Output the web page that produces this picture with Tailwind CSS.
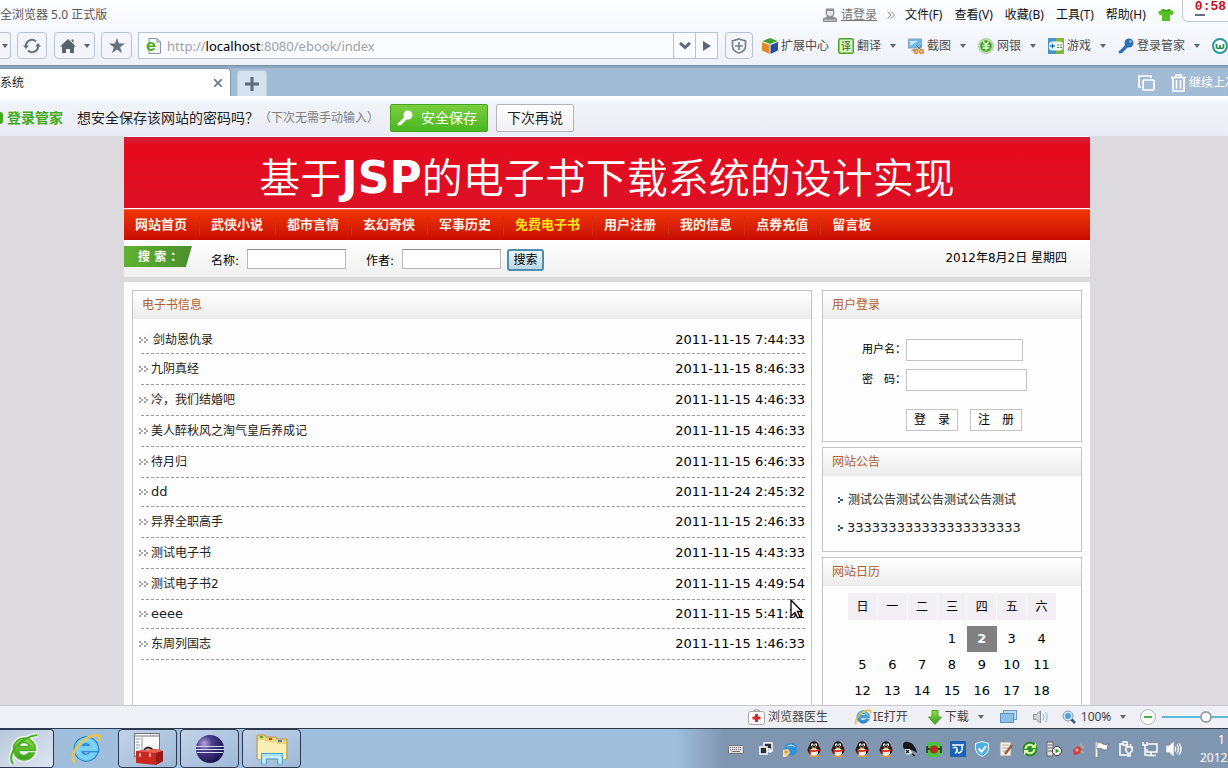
<!DOCTYPE html>
<html lang="zh-CN">
<head>
<meta charset="utf-8">
<title>基于JSP的电子书下载系统</title>
<script src="https://cdn.jsdelivr.net/npm/@tailwindcss/browser@4"></script>
</head>
<body class="relative flex h-screen flex-col overflow-hidden whitespace-nowrap bg-[#dcdade] font-['Noto_Sans','Noto_Sans_CJK_SC',sans-serif] text-xs text-[#222]">

<svg class="absolute h-0 w-0" aria-hidden="true">
  <defs>
    <linearGradient id="ieBlue" x1="0" y1="0" x2="0" y2="1"><stop offset="0" stop-color="#7fd6f8"/><stop offset="1" stop-color="#1f7fc4"/></linearGradient>
    <linearGradient id="leaf" x1="0" y1="0" x2="0" y2="1"><stop offset="0" stop-color="#8fdc4a"/><stop offset="1" stop-color="#3a9d1c"/></linearGradient>
    <radialGradient id="orb" cx=".3" cy=".3" r=".8"><stop offset="0" stop-color="#b9a6dc"/><stop offset=".35" stop-color="#4a3c8c"/><stop offset="1" stop-color="#17104a"/></radialGradient>
  </defs>
  <symbol id="caret" viewBox="0 0 6 4"><path d="M0 0h6L3 4z" fill="#5c6470"/></symbol>
  <symbol id="chev" viewBox="0 0 9 7"><path d="M0 0h2v2H0zM2 2h2v2H2zM0 4h2v2H0zM5 0h2v2H5zM7 2h2v2H7zM5 4h2v2H5z" fill="#a2a2a2"/></symbol>
  <symbol id="dot" viewBox="0 0 5 6"><path d="M0 0h2v2H0zM2 2h3v2H2zM0 4h2v2H0z" fill="#2c5a7c"/></symbol>
  <symbol id="key" viewBox="0 0 16 16"><circle cx="11" cy="5" r="4.5"/><path d="M8 6l2.500 2.500L4 15l-3 .5L.5 13l1.500-.5z"/><circle cx="12.500" cy="3.500" r="1.200" fill="#fff" fill-opacity=".6"/></symbol>
  <symbol id="e" viewBox="0 0 32 32">
    <path d="M16 5a11 11 0 1 0 10.500 15h-6a5.500 5.500 0 0 1-10-2.500H27.500A11.500 11.500 0 0 0 16 5zm-5.300 8.500a5.500 5.500 0 0 1 10.600 0z"/>
  </symbol>
  <symbol id="penguin" viewBox="0 0 16 16">
    <ellipse cx="8" cy="9" rx="6.500" ry="5.500" fill="#2a1c1c"/><circle cx="8" cy="5" r="4.700" fill="#1f1616"/>
    <ellipse cx="8" cy="11" rx="4" ry="4" fill="#f6f2ee"/><circle cx="6.300" cy="4" r="1.400" fill="#fff"/><circle cx="9.700" cy="4" r="1.400" fill="#fff"/>
    <circle cx="6.600" cy="4.200" r=".6" fill="#111"/><circle cx="9.400" cy="4.200" r=".6" fill="#111"/>
    <path d="M5 6.500h6L8 8z" fill="#f5a31c"/><path d="M3 8c3 1.700 7 1.700 10 0v2c-3 1.300-6 1.300-8 .8V13H3.500z" fill="#d8301c"/>
    <path d="M3 14.500h4.500v1.500H3zM8.500 14.500H13v1.500H8.500z" fill="#e79a22"/>
  </symbol>
</svg>

<!-- window title and menu -->
<header class="flex h-[30px] shrink-0 items-center justify-between bg-linear-to-b from-[#fdfdfe] to-[#f6f8fd]">
  <span class="text-[#555]">全浏览器 5.0 正式版</span>
  <div class="flex w-[405px] shrink-0 items-center self-stretch overflow-hidden">
    <svg class="mr-1 h-4 w-3.5 shrink-0" viewBox="0 0 14 16"><path d="M3 1.500h8l.5 5-1.500 3 4 2V15H0v-3.500l4-2-1.500-3z" fill="#8b8f94"/><path d="M4 4h6v3.500L7 9.500 4 7.500z" fill="#e6e6e6"/><path d="M1 12.500h12v1.500H1z" fill="#bcbfc2"/></svg>
    <a href="#" class="text-[#777] underline">请登录</a>
    <svg class="mr-2.5 ml-2.5 h-2 w-2 shrink-0" viewBox="0 0 8 8" fill="none" stroke="#8a8a8a"><path d="M.5.5L4 4 .5 7.500M4 .5L7.500 4 4 7.500"/></svg>
    <nav class="flex gap-3 text-[#111]">
      <a href="#">文件(F)</a><a href="#">查看(V)</a><a href="#">收藏(B)</a><a href="#">工具(T)</a><a href="#">帮助(H)</a>
    </nav>
    <svg class="ml-3 h-3.5 w-4 shrink-0" viewBox="0 0 16 14"><path d="M5 1q3 2 6 0l5 3-2 3.500-2-1V13H4V6.500l-2 1L0 4z" fill="#55c024"/><path d="M5 1q3 2 6 0l1.500 1Q8 5 3.500 2z" fill="#3a9a18"/></svg>
    <div class="ml-2 flex h-[22px] w-16 shrink-0 flex-col self-start rounded-bl-md border border-t-0 border-[#c0c9d4] bg-white/60 pl-3">
      <span class="font-['Liberation_Mono',monospace] text-[13px] leading-[14px] font-bold text-[#c01020]">0:58.</span>
      <span class="h-0.5 w-2.5 bg-[#666f80]"></span>
    </div>
  </div>
</header>

<!-- address toolbar -->
<div class="flex h-[35px] shrink-0 items-center bg-linear-to-b from-[#f6f8fd] to-[#edf2f8] pb-1 text-[#4c4c4c]">
  <button aria-label="前进" class="flex h-[27px] w-[11px] items-center rounded-r border border-l-0 border-[#b9c2d0] bg-[#f3f5fa]"><svg class="ml-0.5 h-1 w-1.5"><use href="#caret"/></svg></button>
  <button aria-label="刷新" class="ml-1.5 flex h-[27px] w-[30px] items-center justify-center rounded border border-[#b9c2d0] bg-[#f3f5fa]">
    <svg class="h-[18px] w-[18px]" viewBox="0 0 18 18" fill="none" stroke="#6c7680" stroke-width="2.200"><path d="M3 10a6 6 0 0 1 10-5.500M15 8A6 6 0 0 1 5 13.500"/><path d="M0 8.500h6L3 12zM12 9.500h6L15 6z" fill="#6c7680" stroke="none"/></svg></button>
  <button aria-label="主页" class="ml-[7px] flex h-[27px] w-[41px] items-center justify-center gap-2 rounded border border-[#b9c2d0] bg-[#f3f5fa]">
    <svg class="h-4 w-4" viewBox="0 0 16 16" fill="#59636e"><path d="M8 1l8 7.500h-2V15h-4v-4H6v4H2V8.500H0zM11.500 1.500h2V5l-2-2z"/></svg><svg class="h-1 w-1.5"><use href="#caret"/></svg></button>
  <button aria-label="收藏" class="ml-1.5 flex h-[27px] w-[31px] items-center justify-center rounded border border-[#b9c2d0] bg-[#f3f5fa]">
    <svg class="h-4 w-4" viewBox="0 0 16 16" fill="#66717c"><path d="M8 0l2 5.600h6l-4.800 3.600L13 15.200 8 11.600l-5 3.600 1.800-6L0 5.600h6z"/></svg></button>
  <div class="ml-1.5 flex h-[27px] min-w-0 flex-1 items-stretch border border-[#b9c2d0] bg-[#f9fbfe]">
    <label for="url" class="flex items-center pl-[7px]"><svg class="h-4 w-4" viewBox="0 0 16 16"><path d="M3 .5h8L14.500 4v11.500H3z" fill="#f2f5f7" stroke="#8a949c"/><path d="M11 .5V4h3.500" fill="none" stroke="#8a949c"/><svg x="-1.500" y="2" width="13" height="13" fill="#4cae1f"><use href="#e"/></svg></svg></label>
    <div class="relative min-w-0 flex-1">
      <input id="url" aria-label="地址" class="absolute inset-0 w-full pl-1.5 text-[13px] outline-none">
      <span class="pointer-events-none relative block pl-[5px] text-[13px] leading-[26px] text-[#a0a2a8]">http://<span class="text-black">localhost</span>:8080/ebook/index</span>
    </div>
    <button aria-label="历史地址" class="flex w-[22px] items-center justify-center border-l border-[#b9c2d0]"><svg class="h-2 w-3" viewBox="0 0 12 8" fill="none" stroke="#5d6874" stroke-width="3"><path d="M1 1l5 4.500L11 1"/></svg></button>
    <button aria-label="转到" class="flex w-[22px] items-center justify-center border-l border-[#b9c2d0]"><svg class="h-2.5 w-2" viewBox="0 0 8 10"><path d="M0 0l8 5-8 5z" fill="#5d6874"/></svg></button>
  </div>
  <button aria-label="安全防护" class="ml-[7px] flex h-[27px] w-7 items-center justify-center rounded border border-[#b9c2d0] bg-[#f3f5fa]">
    <svg class="h-4 w-4" viewBox="0 0 16 16" fill="none" stroke="#77828d" stroke-width="1.700"><path d="M8 1l6.500 2v5c0 4-3 6-6.500 7-3.500-1-6.500-3-6.500-7V3z"/><path d="M8 4v8M4 8h8"/></svg></button>
  <nav class="flex w-[475px] shrink-0 items-center overflow-hidden pl-[9px] [&>button]:shrink-0">
    <button class="flex items-center gap-[3px]"><svg class="h-4 w-4" viewBox="0 0 16 16"><path d="M8 0l7.500 3L8 6 .5 3z" fill="#3fa02a"/><path d="M0 4l7.500 3v9L0 12.500z" fill="#e08a2c"/><path d="M16 4L8.500 7v9l7.500-3.500z" fill="#2350a0"/></svg>扩展中心</button>
    <button class="ml-[9px] flex items-center gap-[3px]"><svg class="h-4 w-4" viewBox="0 0 16 16"><rect x=".75" y=".75" width="14.500" height="14.500" rx="1.500" fill="#d8f2bc" stroke="#4ea02c" stroke-width="1.500"/><text x="3" y="12" font-size="10" fill="#2b6d18">译</text></svg>翻译<svg class="ml-1.5 h-1 w-1.5"><use href="#caret"/></svg></button>
    <button class="ml-3 flex items-center gap-[3px]"><svg class="h-4 w-4" viewBox="0 0 16 16"><rect x=".5" y="1" width="13" height="9" fill="#6cb8ea" stroke="#8ca4b8"/><path d="M3 13h6v-2H5z" fill="#8ca4b8"/><path d="M2 3h8L2 8z" fill="#c5e7fa"/><path d="M8 7l5 5M14 7l-5 5" stroke="#777"/><g fill="none" stroke="#e98322" stroke-width="1.500"><circle cx="8" cy="13.500" r="1.800"/><circle cx="13.500" cy="13.500" r="1.800"/></g></svg>截图<svg class="ml-1.5 h-1 w-1.5"><use href="#caret"/></svg></button>
    <button class="ml-3 flex items-center gap-[3px]"><svg class="h-4 w-4" viewBox="0 0 16 16"><circle cx="8" cy="8" r="7.500" fill="#bde49a" stroke="#b8c8b0"/><circle cx="8" cy="8" r="5.800" fill="#3da22a"/><path d="M5 3.500l3 3 3-3M8 6.500v6M4.500 7.500h7M4.500 10h7" stroke="#e8fbd0" stroke-width="1.400" fill="none"/></svg>网银<svg class="ml-1.5 h-1 w-1.5"><use href="#caret"/></svg></button>
    <button class="ml-3 flex items-center gap-[3px]"><svg class="h-4 w-4" viewBox="0 0 16 16"><path d="M0 0h8v16H0z" fill="#4694c8"/><path d="M8 0h8v16H8z" fill="#83b63a"/><rect x="1" y="3.500" width="14" height="9" rx="3.500" fill="#f4fbff"/><path d="M4.500 5.500v5M2 8h5" stroke="#2a78b0" stroke-width="1.400"/><path d="M9 6.500h2v1H9zM12 6.500h2v1h-2zM9 9h2v1H9zM12 9h2v1h-2z" fill="#4a8a22"/></svg>游戏<svg class="ml-1.5 h-1 w-1.5"><use href="#caret"/></svg></button>
    <button class="ml-3 flex items-center gap-[3px]"><svg class="h-4 w-4" fill="#2d6fb0"><use href="#key"/></svg>登录管家<svg class="ml-1.5 h-1 w-1.5"><use href="#caret"/></svg></button>
    <button aria-label="微博" class="ml-3"><svg class="h-4 w-[18px]" viewBox="0 0 18 16"><circle cx="8" cy="8" r="7" fill="#f4fcff" stroke="#2b9a98" stroke-width="2"/><path d="M4.500 6v3.500q1.700 2 3.500 0V7v2.500q1.700 2 3.500 0V6" stroke="#288b48" stroke-width="1.700" fill="none"/></svg></button>
  </nav>
</div>

<!-- tabs -->
<div class="flex h-[31px] shrink-0 items-end border-t border-[#7b93ab] bg-[#a3bcd6] shadow-[inset_0_2px_1px_#8ba5be]">
  <div class="z-10 flex h-7 w-[231px] items-center justify-between rounded-tr border-t border-r border-[#7f9ab5] bg-white pr-[7px] text-[#222]">系统
    <button aria-label="关闭标签" class="p-px"><svg class="h-2 w-2" viewBox="0 0 8 8" stroke="#6c7c8c" stroke-width="1.800"><path d="M0 0l8 8M8 0L0 8"/></svg></button></div>
  <button aria-label="新建标签" class="ml-1.5 flex h-[26px] w-[30px] items-center justify-center rounded-t border border-b-0 border-[#bccddf] bg-[#d5e2ef]"><svg class="h-3.5 w-3.5" viewBox="0 0 14 14" stroke="#5c6b78" stroke-width="3"><path d="M7 0v14M0 7h14"/></svg></button>
  <div class="ml-auto flex w-[90px] items-center self-stretch overflow-hidden pt-1 text-white">
    <svg class="h-4 w-[17px] shrink-0" viewBox="0 0 17 16" fill="none" stroke="#fff" stroke-width="1.700"><path d="M3 12H1V1h12v2"/><rect x="5" y="5" width="11" height="10" rx="1"/></svg>
    <svg class="ml-4 h-[18px] w-[15px] shrink-0" viewBox="0 0 15 18" fill="none" stroke="#fff" stroke-width="1.700"><path d="M0 3.500h15M5 3V1h5v2M2 4v13h11V4M5.500 6v9M9.500 6v9"/></svg>
    <a href="#" class="ml-[3px]">继续上次</a>
  </div>
</div>

<!-- password prompt -->
<div class="flex h-10 shrink-0 items-center bg-linear-to-b from-white via-[#eff3f7] via-20% to-[#ebebf5] pt-1 text-sm leading-5">
  <span class="h-3 w-[3px] rounded-r bg-[#45aa1c]"></span>
  <span class="ml-1 font-bold text-[#45a91e]">登录管家</span>
  <span class="ml-3.5">想安全保存该网站的密码吗？</span>
  <span class="text-xs text-[#808080]">（下次无需手动输入）</span>
  <button class="ml-[11px] flex h-7 w-[98px] items-center gap-2 rounded-xs border border-[#46a31f] bg-linear-to-b from-[#79cf3e] to-[#47b71f] pl-1.5 text-white"><svg class="h-4 w-4" fill="#fff"><use href="#key"/></svg>安全保存</button>
  <button class="ml-2 h-7 w-[78px] rounded-xs border border-[#b4b4b8] bg-linear-to-b from-white to-[#f1f1f3]">下次再说</button>
</div>

<!-- web page -->
<main class="flex min-h-0 flex-1 justify-center overflow-hidden pr-3.5 font-['DejaVu_Sans','Noto_Sans_CJK_SC',sans-serif]">
  <div class="flex w-full max-w-[966px] flex-col bg-[#fdfdfd]">
    <div class="mt-px flex h-[71px] shrink-0 items-center justify-center bg-linear-to-b from-[#c9203a] via-[#e60a1c] via-10% to-[#dc1026] pt-2">
      <h1 class="font-['Noto_Sans_CJK_SC',sans-serif] text-[41px] leading-[56px] font-[350] text-white">基于<span class="font-['DejaVu_Sans',sans-serif] text-[44px] font-bold">JSP</span>的电子书下载系统的设计实现</h1>
    </div>
    <nav class="mt-px flex h-[31px] shrink-0 items-center border-t border-[#e8644c] bg-linear-to-b from-[#f23404] to-[#c80a04] text-[13px] leading-5 font-bold text-[#ffefe6]">
      <a href="#" class="border-r border-[#d42c10] pr-3 pl-[11px]">网站首页</a><a href="#" class="border-r border-[#d42c10] pr-3 pl-[11px]">武侠小说</a><a href="#" class="border-r border-[#d42c10] pr-3 pl-[11px]">都市言情</a><a href="#" class="border-r border-[#d42c10] pr-3 pl-[11px]">玄幻奇侠</a><a href="#" class="border-r border-[#d42c10] pr-3 pl-[11px]">军事历史</a><a href="#" class="border-r border-[#d42c10] pr-3 pl-[11px] text-[#ffe61a]">免费电子书</a><a href="#" class="border-r border-[#d42c10] pr-3 pl-[11px]">用户注册</a><a href="#" class="border-r border-[#d42c10] pr-3 pl-[11px]">我的信息</a><a href="#" class="border-r border-[#d42c10] pr-3 pl-[11px]">点券充值</a><a href="#" class="pl-[11px]">留言板</a>
    </nav>
    <form class="flex h-[42px] shrink-0 items-start border-b-[5px] border-[#dadadb] bg-linear-to-b from-white to-[#f0f0f1] pt-1.5 text-black">
      <span class="h-[21px] w-[68px] bg-linear-to-r from-[#5fb230] to-[#4a8f2c] pl-3.5 leading-[22px] font-bold text-white [clip-path:polygon(0_0,100%_0,91%_100%,0_100%)]">搜 索 ：</span>
      <label for="book" class="ml-[19px] w-9 pt-[7px] leading-4">名称:</label>
      <input id="book" class="mt-[3px] h-5 w-[99px] border border-[#b9b9bd] border-t-[#8c8c90] bg-white px-1">
      <label for="author" class="ml-5 w-9 pt-[7px] leading-4">作者:</label>
      <input id="author" class="mt-[3px] h-5 w-[99px] border border-[#b9b9bd] border-t-[#8c8c90] bg-white px-1">
      <button type="button" class="mt-[3px] ml-1.5 h-[22px] w-[37px] rounded-[3px] border-2 border-[#4f8fae] bg-linear-to-b from-[#eef6fa] to-[#bcd6e4] leading-4">搜索</button>
      <time class="mr-[23px] ml-auto pt-0.5 leading-5">2012年8月2日 星期四</time>
    </form>

    <div class="flex flex-1 items-stretch gap-2.5 px-2 pt-2">
      <section class="min-w-0 flex-1 border border-b-0 border-[#c4c4c6]">
        <h2 class="h-7 bg-linear-to-b from-white to-[#ececed] pl-[9px] leading-7 text-[#b0602e]">电子书信息</h2>
        <ul class="pt-2 pr-1.5 pl-2 text-[13px] text-black [&_a]:text-xs [&_a]:text-[#222] [&>li]:flex [&>li]:h-[31px] [&>li]:items-center [&>li]:border-b [&>li]:border-dashed [&>li]:border-[#9a9a9a] [&_svg]:mr-[3px] [&_svg]:-ml-0.5 [&_svg]:h-[7px] [&_svg]:w-[9px] [&_time]:ml-auto">
          <li class="h-[27px]!"><svg><use href="#chev"/></svg><a href="#" class="pl-0.5">剑劫恩仇录</a><time>2011-11-15 7:44:33</time></li>
          <li><svg><use href="#chev"/></svg><a href="#">九阴真经</a><time>2011-11-15 8:46:33</time></li>
          <li><svg><use href="#chev"/></svg><a href="#">冷，我们结婚吧</a><time>2011-11-15 4:46:33</time></li>
          <li><svg><use href="#chev"/></svg><a href="#">美人醉秋风之淘气皇后养成记</a><time>2011-11-15 4:46:33</time></li>
          <li><svg><use href="#chev"/></svg><a href="#">待月归</a><time>2011-11-15 6:46:33</time></li>
          <li class="h-[29px]!"><svg><use href="#chev"/></svg><a href="#" class="text-[13px]!">dd</a><time>2011-11-24 2:45:32</time></li>
          <li><svg><use href="#chev"/></svg><a href="#">异界全职高手</a><time>2011-11-15 2:46:33</time></li>
          <li><svg><use href="#chev"/></svg><a href="#">测试电子书</a><time>2011-11-15 4:43:33</time></li>
          <li><svg><use href="#chev"/></svg><a href="#">测试电子书2</a><time>2011-11-15 4:49:54</time></li>
          <li class="h-[29px]!"><svg><use href="#chev"/></svg><a href="#" class="text-[13px]!">eeee</a><time>2011-11-15 5:41:31</time></li>
          <li><svg><use href="#chev"/></svg><a href="#">东周列国志</a><time>2011-11-15 1:46:33</time></li>
        </ul>
      </section>

      <aside class="flex w-[260px] shrink-0 flex-col gap-[5px]">
        <section class="border border-[#c4c4c6]">
          <h2 class="h-7 bg-linear-to-b from-white to-[#ececed] pl-[9px] leading-7 text-[#b0602e]">用户登录</h2>
          <form class="flex flex-col gap-2 pt-5 pb-2.5 pl-[39px] text-black">
            <div class="flex items-center"><label for="user" class="w-11 text-[11px]">用户名：</label><input id="user" class="h-[22px] w-[117px] border border-[#c4c4c6] bg-white px-1"></div>
            <div class="flex items-center"><label for="pass" class="w-11 text-[11px]">密　码：</label><input id="pass" type="password" class="h-[22px] w-[121px] border border-[#c4c4c6] bg-white px-1"></div>
            <div class="flex gap-3 pt-2.5 pl-11"><button type="button" class="h-[22px] w-[52px] border border-[#c4c4c6] bg-white leading-5">登　录</button><button type="button" class="h-[22px] w-[52px] border border-[#c4c4c6] bg-white leading-5">注　册</button></div>
          </form>
        </section>
        <section class="border border-[#c4c4c6]">
          <h2 class="h-7 bg-linear-to-b from-white to-[#ececed] pl-[9px] leading-7 text-[#b0602e]">网站公告</h2>
          <ul class="pt-2.5 pb-[9px] pl-[15px] text-[#222]">
            <li class="flex h-7 items-center gap-[5px]"><svg class="h-1.5 w-[5px]"><use href="#dot"/></svg><a href="#">测试公告测试公告测试公告测试</a></li>
            <li class="flex h-7 items-center gap-1"><svg class="h-1.5 w-[5px]"><use href="#dot"/></svg><a href="#" class="text-[13px]">333333333333333333333</a></li>
          </ul>
        </section>
        <section class="flex-1 border border-b-0 border-[#c4c4c6]">
          <h2 class="h-7 bg-linear-to-b from-white to-[#ececed] pl-[9px] leading-7 text-[#b0602e]">网站日历</h2>
          <table class="mt-[7px] ml-6 w-[210px] table-fixed border-collapse text-center text-[13px] text-black [&_td]:h-[26px] [&_th]:h-[27px] [&_th]:border-x [&_th]:border-[#fdfdfd] [&_th]:bg-[#f1eff3] [&_th]:text-xs [&_th]:font-normal">
            <thead><tr><th>日</th><th>一</th><th>二</th><th>三</th><th>四</th><th>五</th><th>六</th></tr></thead>
            <tbody>
              <tr><td colspan="7" class="h-1.5! p-0"></td></tr>
              <tr><td></td><td></td><td></td><td>1</td><td class="bg-[#808080] font-bold text-white">2</td><td>3</td><td>4</td></tr>
              <tr><td>5</td><td>6</td><td>7</td><td>8</td><td>9</td><td>10</td><td>11</td></tr>
              <tr><td>12</td><td>13</td><td>14</td><td>15</td><td>16</td><td>17</td><td>18</td></tr>
            </tbody>
          </table>
        </section>
      </aside>
    </div>
  </div>
</main>

<!-- browser status bar -->
<footer class="flex h-[23px] shrink-0 justify-end border-t border-[#c9c9d2] bg-[#efeff6] text-[#444]">
  <div class="flex w-[480px] items-center overflow-hidden">
    <button class="flex items-center gap-[3px]"><svg class="h-4 w-[17px]" viewBox="0 0 17 16"><path d="M6 3V1h5v2" fill="none" stroke="#999"/><rect x=".5" y="2.500" width="16" height="13" rx="2" fill="#fff" stroke="#a6a6a6"/><path d="M7 5h3v2.500h2.500v3H10V13H7v-2.500H4.500v-3H7z" fill="#d02a20"/></svg>浏览器医生</button>
    <button class="ml-[26px] flex items-center gap-px"><svg class="h-[18px] w-[18px]" viewBox="0 0 32 32"><use href="#e" fill="url(#ieBlue)" stroke="#2c86c0" stroke-width="1.500"/><path d="M4 29C-1 20 16 3 28 4q3 1 1 6" fill="none" stroke="#e8b93c" stroke-width="2.500"/></svg>IE打开</button>
    <button class="ml-5 flex items-center gap-[3px]"><svg class="h-[15px] w-3.5" viewBox="0 0 14 15"><path d="M4 .5h6V7h3.500L7 14.500.5 7H4z" fill="url(#leaf)" stroke="#4aa520"/></svg>下载<svg class="ml-1.5 h-1 w-1.5"><use href="#caret"/></svg></button>
    <button aria-label="窗口" class="ml-4"><svg class="h-3.5 w-[17px]" viewBox="0 0 17 14"><rect x="3.500" y=".5" width="13" height="9" fill="#b8dbf0" stroke="#6d9fc6"/><rect x=".5" y="3.500" width="13" height="9" fill="#8fc0e4" stroke="#5c92bf"/></svg></button>
    <button aria-label="声音" class="ml-4"><svg class="h-3.5 w-4" viewBox="0 0 16 14" fill="none" stroke="#8a9098"><path d="M.5 4.500h3L7.500 1v12l-4-3.500h-3z" fill="#d0d3d8"/><path d="M10 4q2 3 0 6M12.500 2q3.500 5 0 10" stroke="#8fb4cf"/></svg></button>
    <button class="ml-[13px] flex items-center gap-[5px]"><svg class="h-3.5 w-3.5" viewBox="0 0 14 14"><circle cx="6" cy="6" r="5" fill="#cfeafa" stroke="#8796a4"/><circle cx="6" cy="6" r="3" fill="#4f9fd8"/><path d="M9.500 9.500l3.500 3.500" stroke="#3c5a78" stroke-width="2.500"/></svg>100%<svg class="ml-1 h-1 w-1.5"><use href="#caret"/></svg></button>
    <button aria-label="缩小" class="ml-3.5 flex h-4 w-4 shrink-0 items-center justify-center rounded-full border border-[#b5b9bd] bg-[#f5faf4]"><span class="h-0.5 w-2 bg-[#58a84c]"></span></button>
    <input type="range" aria-label="缩放" value="50" class="ml-1.5 h-4 w-[88px] shrink-0 appearance-none bg-transparent bg-linear-to-r from-[#5cb9d8] to-[#5cb9d8] bg-[length:100%_2px] bg-center bg-no-repeat [&::-webkit-slider-thumb]:h-3 [&::-webkit-slider-thumb]:w-3 [&::-webkit-slider-thumb]:appearance-none [&::-webkit-slider-thumb]:rounded-full [&::-webkit-slider-thumb]:border-2 [&::-webkit-slider-thumb]:border-[#9aa2aa] [&::-webkit-slider-thumb]:bg-white">
  </div>
</footer>

<!-- desktop taskbar -->
<div class="flex h-10 shrink-0 items-center gap-[3px] border-t border-[#2c3a50] bg-linear-to-r from-[#9fbfdd] from-55% to-[#8096b0] to-59%">
  <button aria-label="360浏览器" class="flex h-[39px] w-[54px] items-center justify-center rounded-r-sm border border-l-0 border-[#2b3850] bg-linear-to-br from-[#b9c8dc] to-[#dce6f2] pr-1.5">
    <svg class="h-8 w-8" viewBox="0 0 32 32"><use href="#e" fill="#fff" stroke="#fff" stroke-width="4"/><path d="M5 31C-2 20 14 4 29 2" fill="none" stroke="#fff" stroke-width="4.500"/><use href="#e" fill="url(#leaf)" stroke="#4bb026" stroke-width="1.500"/><path d="M5 31C-2 20 14 4 29 2" fill="none" stroke="#48ae22" stroke-width="2.200"/></svg></button>
  <button aria-label="Internet Explorer" class="flex h-[39px] w-[58px] items-center justify-center">
    <svg class="h-8 w-8" viewBox="0 0 32 32"><use href="#e" fill="#6fc8f2" stroke="#2480c0" stroke-width="3.500"/><use href="#e" fill="#7fd4f8" stroke="#6cc8f4" stroke-width="1.500"/><path d="M5 30C-3 23 12 3 27 2q4 0 2 6" fill="none" stroke="#ecc44c" stroke-width="2.500"/></svg></button>
  <button aria-label="工具箱" class="flex h-[39px] w-[59px] items-center justify-center rounded-sm border border-[#2b3850] bg-linear-to-br from-[#c3d3e8] to-[#9db9d8]">
    <svg class="h-8 w-8" viewBox="0 0 32 32"><rect x="2.500" y=".5" width="25" height="23" fill="#fbfbfb" stroke="#70757c"/><path d="M3 3h24" stroke="#70757c"/><path d="M18 2h1M21 2h1M24 2h1M4 6h4M4 9h3M4 12h4M4 15h3M10 4v19" stroke="#8c98a5"/><path d="M12 17q4-5 9 0" fill="none" stroke="#30201e" stroke-width="1.800"/><path d="M4 18l20-2 7 2v10l-7 4-20-2z" fill="#c9281f"/><path d="M4 18l20-2 7 2-7 2z" fill="#ea6054"/><path d="M8 20v4M18 20v4" stroke="#f3d8d0" stroke-width="1.500"/><path d="M24 20v12l7-4V18z" fill="#981a14"/></svg></button>
  <button aria-label="Eclipse" class="flex h-[39px] w-[59px] items-center justify-center rounded-sm border border-[#2b3850] bg-linear-to-br from-[#c3d3e8] to-[#9db9d8]">
    <svg class="h-[30px] w-[30px]" viewBox="0 0 30 30"><circle cx="15" cy="15" r="14" fill="url(#orb)"/><path d="M1 12.500h28M1 15.500h28M2 18.500h26" stroke="#d8dcf2" stroke-width="1.200"/></svg></button>
  <button aria-label="资源管理器" class="flex h-[39px] w-[59px] items-center justify-center rounded-sm border border-[#2b3850] bg-linear-to-br from-[#c3d3e8] to-[#9db9d8]">
    <svg class="h-8 w-8" viewBox="0 0 32 32"><path d="M1 5V2h8l1 2h10l1 2h10v20H1z" fill="#ecd27c" stroke="#b59a48"/><path d="M2 7h8l1 2h9l1 2h9v15H2z" fill="#fbeeb4"/><path d="M4 3h3v2H4z" fill="#4aa53c"/><path d="M13 5h3v2h-3z" fill="#c8402c"/><path d="M22 7h4v2h-4z" fill="#3c86c8"/><path d="M5.500 31V20.500h21V31h-5v-5h-11v5z" fill="#a8e0f6" stroke="#4aa8d0"/><path d="M8 31v-7h16v7" fill="none" stroke="#e8f8fe"/></svg></button>

  <div class="ml-auto flex w-[500px] shrink-0 items-center gap-2 overflow-hidden [&>svg]:h-4 [&>svg]:w-4 [&>svg]:shrink-0">
    <svg class="mr-1.5" viewBox="0 0 16 16"><rect x=".5" y="4.500" width="15" height="8" rx="1" fill="#dcdcdc" stroke="#777"/><path d="M2 6.500h12M2 8.500h12" stroke="#777" stroke-dasharray="1 1"/><path d="M4 10.500h8" stroke="#777"/></svg>
    <svg viewBox="0 0 16 16" fill="#2a2f38" stroke="#fff" stroke-width="1.500"><rect x="6" y="2" width="8" height="8"/><rect x="2" y="6" width="7" height="7"/><path d="M8 8h4v4" fill="none"/></svg>
    <svg viewBox="0 0 16 16"><path d="M2 8Q3 1 11 2q5 2 4.500 8Q13 16 6 14z" fill="#3491d4"/><path d="M4 6q5-5 10 0-5-2-10 0z" fill="#bde6fa"/><path d="M1 9l5-1 2 4-4 4H1z" fill="#f5dc9a"/><circle cx="4" cy="11" r="1.500" fill="#e88a20"/></svg>
    <svg><use href="#penguin"/></svg><svg><use href="#penguin"/></svg><svg><use href="#penguin"/></svg><svg><use href="#penguin"/></svg>
    <svg viewBox="0 0 16 16"><path d="M1 5q0-5 5-4 7 1 9 11-5-4-9-3-5 0-5-4z" fill="#161616"/><path d="M3 8h5l2 4-4 2-3-2z" fill="#f0f0f0"/><path d="M4 9l3 3M7 9l-3 3M10 13l3 2" stroke="#111" stroke-width="1.300"/></svg>
    <svg viewBox="0 0 16 16"><path d="M3 1h10l2 3v9l-3 3H3l-2-3V3z" fill="#46c63c"/><path d="M1 5v7M15 5v7M1 8h14" stroke="#16351a" stroke-width="1.500"/><circle cx="8" cy="8.500" r="4" fill="#b82c1c"/></svg>
    <svg viewBox="0 0 16 16"><rect width="16" height="16" rx="1" fill="#1a62b6"/><path d="M2 4h12M3 7q3-2 4 1t-2 4M8 12q5 0 4-7" stroke="#fff" stroke-width="1.600" fill="none"/></svg>
    <svg viewBox="0 0 16 16"><path d="M8 .5l6.500 2v6Q14 13 8 15.500 2 13 1.500 8.500v-6z" fill="#4daee0" stroke="#e8f8ff"/><path d="M4.500 7.500L7.500 11 12 5" fill="none" stroke="#fff" stroke-width="2"/></svg>
    <svg viewBox="0 0 16 16"><path d="M2 1h11v14H2z" fill="#f6f2e8" stroke="#999"/><path d="M4 4h7M4 7h6M4 10h4" stroke="#aaa"/><path d="M7 13l7-9" stroke="#9c5a30" stroke-width="2.500"/></svg>
    <svg viewBox="0 0 16 16"><circle cx="8" cy="8" r="7.500" fill="#2d8c2c"/><path d="M3.500 8a4.500 4.500 0 0 1 8-2.500M12.500 8a4.500 4.500 0 0 1-8 2.500" stroke="#d9f8a8" stroke-width="2" fill="none"/><path d="M9 7h5V2zM7 9H2v5z" fill="#d9f8a8"/></svg>
    <svg viewBox="0 0 16 16"><path d="M1 1h6v14H1z" fill="#e2e2e2" stroke="#666"/><path d="M2 4h4M2 7h4M2 10h4" stroke="#666"/><circle cx="11" cy="10" r="4.500" fill="#fff" stroke="#333"/><path d="M9.500 7.500l4 2.500-4 2.500z" fill="#2f9a28"/></svg>
    <svg viewBox="0 0 16 16"><path d="M3 9l5-4 4 3-3 5-5 1z" fill="#cf4038"/><path d="M10 3l4 4M11 10l3 2" stroke="#b8a4a8" stroke-width="2"/><circle cx="7" cy="9" r="1.500" fill="#f0b0a8"/></svg>
    <svg viewBox="0 0 16 16"><path d="M2.500 1v15" stroke="#fff" stroke-width="1.600"/><path d="M3 2q3-1.500 5 .5t7 .5l-2 3 1 2.500q-4 1-6-.5t-5 0z" fill="#fff" stroke="#555" stroke-width=".6"/></svg>
    <svg viewBox="0 0 16 16" fill="none" stroke="#fff" stroke-width="1.500"><path d="M5 3H2v11h7M5 1h4v3H5z"/><path d="M8 6h6v4l-2 2v3h-2v-3l-2-2zM9.500 6V3M12.500 6V3" fill="#8095b0"/></svg>
    <svg viewBox="0 0 16 16" fill="none" stroke="#fff" stroke-width="1.500"><path d="M6 3h9v8H5V8M9 11v3M6 14.500h8M1 1v3h4V1M3 4v10h3"/></svg>
    <svg viewBox="0 0 16 16" fill="none" stroke="#fff" stroke-width="1.300"><path d="M1 5.500h2.500L7 2v12l-3.500-3.500H1z" fill="#fff"/><path d="M9 5.500q1.500 2.500 0 5M11 3.500q3 4.500 0 9M13 2q4 6 0 12"/></svg>
    <div class="ml-2.5 flex shrink-0 flex-col leading-[18px] text-white"><span class="pl-[18px]">1</span><span>2012</span></div>
  </div>
</div>

<!-- mouse pointer -->
<svg class="absolute top-[599px] left-[790px] h-[21px] w-[13px]" viewBox="0 0 13 21"><path d="M1 1v16l4-3.500L7.500 19l2.500-1-2.500-5.500H12z" fill="#fff" stroke="#000" stroke-width="1.300"/></svg>
</body>
</html>
